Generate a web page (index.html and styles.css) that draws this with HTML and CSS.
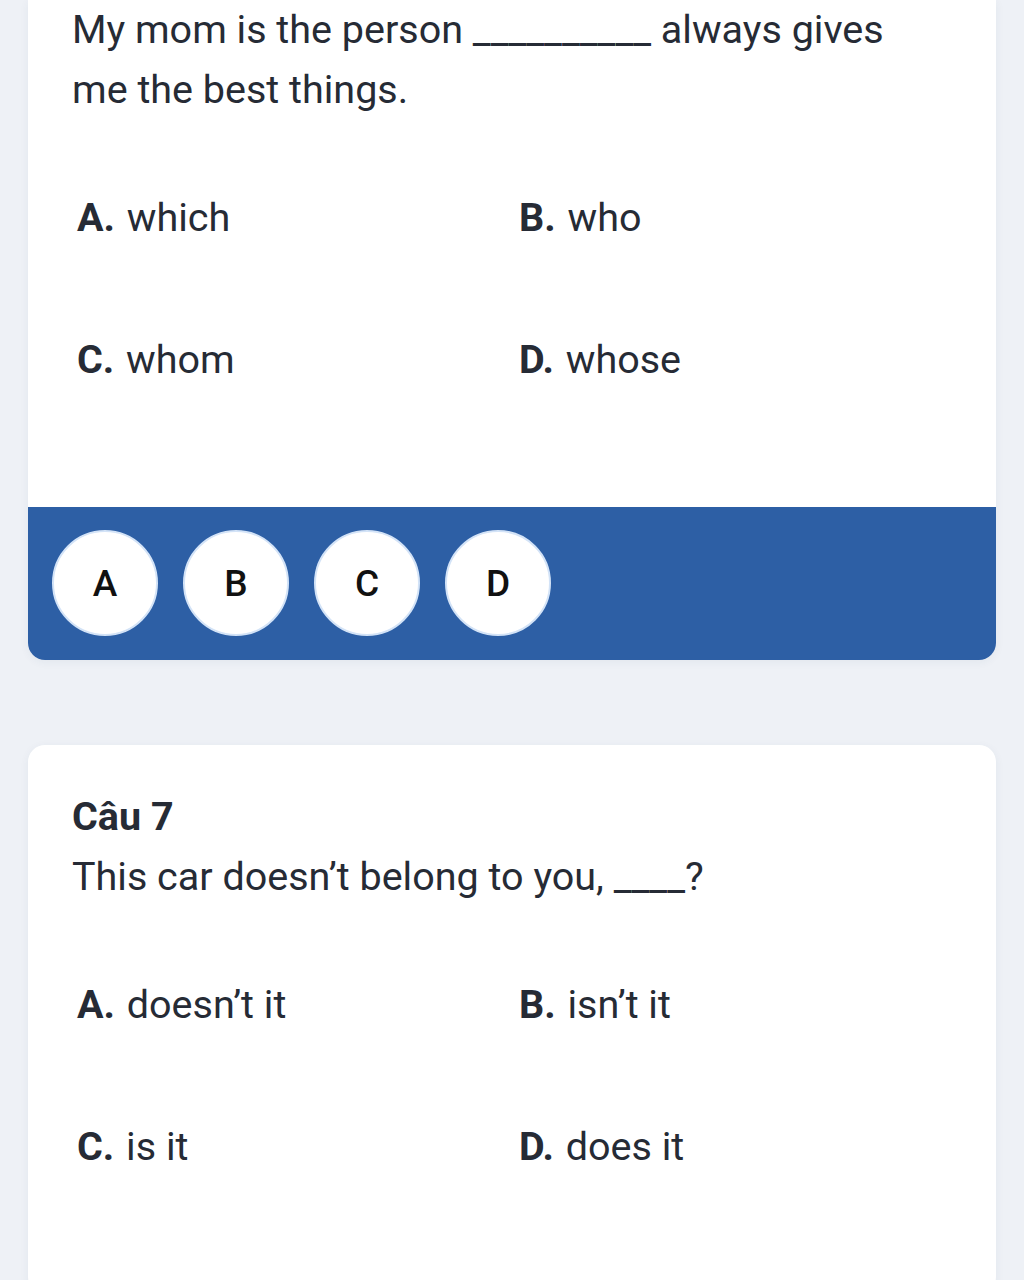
FILE: index.html
```html
<!DOCTYPE html>
<html lang="vi">
<head>
<meta charset="utf-8">
<title>Quiz</title>
<link rel="stylesheet" href="styles.css">
</head>
<body>
<main class="page">
  <section class="card card--cut">
    <div class="card-body">
      <p class="question">My mom is the person __________ always gives me the best things.</p>
      <div class="options">
        <div class="option"><b>A.</b> which</div>
        <div class="option"><b>B.</b> who</div>
        <div class="option"><b>C.</b> whom</div>
        <div class="option"><b>D.</b> whose</div>
      </div>
    </div>
    <div class="answer-bar">
      <span class="bubble">A</span>
      <span class="bubble">B</span>
      <span class="bubble">C</span>
      <span class="bubble">D</span>
    </div>
  </section>

  <section class="card">
    <div class="card-body">
      <h2 class="title">Câu 7</h2>
      <p class="question">This car doesn’t belong to you, ____?</p>
      <div class="options">
        <div class="option"><b>A.</b> doesn’t it</div>
        <div class="option"><b>B.</b> isn’t it</div>
        <div class="option"><b>C.</b> is it</div>
        <div class="option"><b>D.</b> does it</div>
      </div>
    </div>
  </section>
</main>
</body>
</html>
```

FILE: styles.css
```css
* { box-sizing: border-box; }
html, body { margin: 0; padding: 0; }
body {
  background: #eef1f6;
  font-family: Roboto, "Noto Sans", Arial, sans-serif;
  color: #262b35;
}
.page {
  padding: 0 28px;
  display: flex;
  flex-direction: column;
  gap: 85px;
}
.card {
  background: #ffffff;
  border-radius: 17px;
  overflow: hidden;
  box-shadow: 0 2px 10px rgba(40, 60, 100, 0.06);
}
.card--cut {
  border-top-left-radius: 0;
  border-top-right-radius: 0;
}
.card-body {
  padding: 42px 64px 117px 44px;
}
.card--cut .card-body { padding-top: 0; }
.title {
  margin: 0;
  font-size: 39.5px;
  line-height: 60px;
  font-weight: 700;
  color: #262b35;
}
.question {
  margin: 0;
  font-size: 39.5px;
  line-height: 60px;
  font-weight: 400;
}
.options {
  display: grid;
  grid-template-columns: 442px 1fr;
  row-gap: 82px;
  margin-top: 68px;
  padding-left: 5px;
}
.option {
  font-size: 39.5px;
  line-height: 60px;
}
.option b { font-weight: 700; margin-right: 2px; }
.answer-bar {
  background: #2d5fa5;
  padding: 23px 24px 24px;
  display: flex;
  gap: 25px;
}
.bubble {
  width: 106px;
  height: 106px;
  border-radius: 50%;
  background: #ffffff;
  border: 2px solid #d3e3f7;
  display: flex;
  align-items: center;
  justify-content: center;
  font-size: 37px;
  font-weight: 500;
  color: #111111;
}
```
